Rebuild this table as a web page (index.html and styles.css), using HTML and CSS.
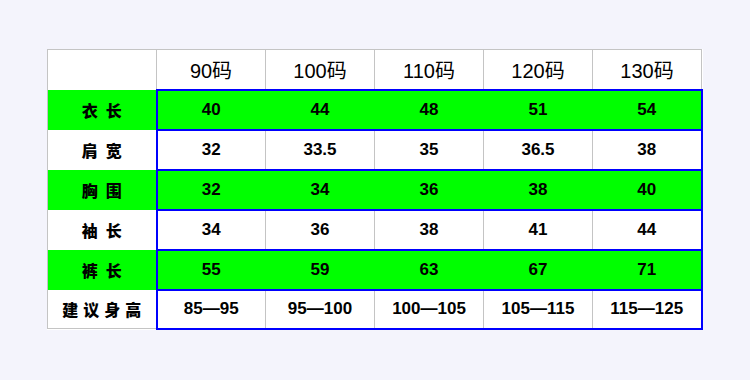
FILE: index.html
```html
<!DOCTYPE html>
<html lang="zh">
<head>
<meta charset="utf-8">
<link rel="stylesheet" href="styles.css">
</head>
<body>
<table class="size-table">
  <colgroup>
    <col class="c"><col class="c"><col class="c"><col class="c"><col class="c"><col class="c">
  </colgroup>
  <tr class="head">
    <th class="lbl"></th>
    <th>90码</th><th>100码</th><th>110码</th><th>120码</th><th>130码</th>
  </tr>
  <tr class="g first">
    <td class="lbl">衣长</td>
    <td class="d1">40</td><td>44</td><td>48</td><td>51</td><td class="d5">54</td>
  </tr>
  <tr class="w">
    <td class="lbl">肩宽</td>
    <td class="d1">32</td><td>33.5</td><td>35</td><td>36.5</td><td class="d5">38</td>
  </tr>
  <tr class="g">
    <td class="lbl">胸围</td>
    <td class="d1">32</td><td>34</td><td>36</td><td>38</td><td class="d5">40</td>
  </tr>
  <tr class="w">
    <td class="lbl">袖长</td>
    <td class="d1">34</td><td>36</td><td>38</td><td>41</td><td class="d5">44</td>
  </tr>
  <tr class="g">
    <td class="lbl">裤长</td>
    <td class="d1">55</td><td>59</td><td>63</td><td>67</td><td class="d5">71</td>
  </tr>
  <tr class="w last">
    <td class="lbl lbl4">建议身高</td>
    <td class="d1">85—95</td><td>95—100</td><td>100—105</td><td>105—115</td><td class="d5">115—125</td>
  </tr>
</table>
</body>
</html>
```

FILE: styles.css
```css
html, body {
  margin: 0;
  padding: 0;
  background: #f4f4fc;
}
body {
  padding: 49px 0 0 47px;
}
.size-table {
  border-collapse: collapse;
  table-layout: fixed;
  width: 655px;
  background: #ffffff;
  font-family: "Liberation Sans", Arial, "Noto Sans CJK SC", sans-serif;
  color: #000;
}
.size-table .c { width: 109px; }
.size-table th,
.size-table td {
  border: 1px solid #c4c4c4;
  text-align: center;
  vertical-align: middle;
  padding: 0;
}
.size-table tr { height: 40px; }
.size-table tr.last { height: 39px; }
.size-table th {
  font-weight: normal;
  font-size: 20px;
  padding-top: 1px;
}
.size-table td {
  font-weight: bold;
  font-size: 17px;
}
.size-table .lbl {
  font-family: "Noto Sans CJK SC", sans-serif;
  font-weight: 900;
  font-size: 16px;
  letter-spacing: 8px;
  padding-left: 8px;
  border-top: none;
  border-bottom: none;
}
.size-table .lbl4 {
  letter-spacing: 5px;
  padding-left: 5px;
}
.size-table tr.head .lbl { border-top: 1px solid #c4c4c4; }
.size-table tr.last .lbl { border-bottom: 1px solid #c4c4c4; }

.size-table tr.g td { background: #00ff00; }
.size-table tr.g td:not(.lbl) {
  border-top: 2px solid #0000ff;
  border-bottom: 2px solid #0000ff;
  border-left: 1px solid #00ff00;
  border-right: 1px solid #00ff00;
}
.size-table td.d1 { border-left: 2px solid #0000ff !important; }
.size-table td.d5 { border-right: 2px solid #0000ff !important; }
.size-table tr.first td:not(.lbl) { border-top: 2px solid #0000ff; }
.size-table tr.last td:not(.lbl) { border-bottom: 2px solid #0000ff; }
```
